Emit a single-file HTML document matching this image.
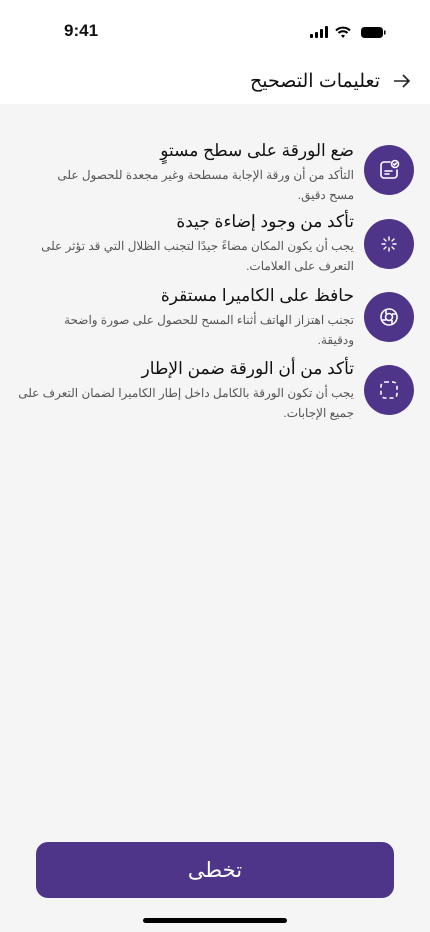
<!DOCTYPE html>
<html><head><meta charset="utf-8"><style>
*{margin:0;padding:0;box-sizing:border-box}
body{width:430px;height:932px;background:#f5f5f5;font-family:"Liberation Sans","Noto Sans CJK SC",sans-serif;position:relative;overflow:hidden;color:#111}
.top{position:absolute;left:0;top:0;width:430px;height:104px;background:#fff}
.time{position:absolute;left:64px;top:21px;font-size:17px;font-weight:bold}
.ht{position:absolute;right:50px;top:70px;font-size:19px;direction:rtl}
.circ{position:absolute;left:364px;width:50px;height:50px;border-radius:50%;background:#4e3589;display:flex;align-items:center;justify-content:center}
.item{position:absolute;right:76px;width:340px;direction:rtl;text-align:right}
.item h3{font-size:17px;font-weight:normal;line-height:22px;color:#111}
.item p{font-size:12px;line-height:20px;color:#555;margin-top:3px;white-space:nowrap}
.btn{position:absolute;left:36px;top:842px;width:358px;height:56px;border-radius:12px;background:#4e3589;color:#fff;font-size:21px;display:flex;align-items:center;justify-content:center}
.home{position:absolute;left:143px;top:918px;width:144px;height:5px;border-radius:3px;background:#000}
</style></head><body>
<div class="top">
<div class="time">9:41</div>
<svg style="position:absolute;left:310px;top:26px" width="76" height="14" viewBox="0 0 76 14">
<rect x="0" y="8" width="3" height="4" rx="1" fill="#000"/><rect x="5" y="6" width="3" height="6" rx="1" fill="#000"/><rect x="10" y="3" width="3" height="9" rx="1" fill="#000"/><rect x="15" y="0" width="3" height="12" rx="1" fill="#000"/>
<path d="M26 4.5a10 10 0 0 1 14 0M28.5 7a6.5 6.5 0 0 1 9 0" stroke="#000" stroke-width="2" fill="none"/><path d="M31 9.5l2 2.5 2-2.5a3 3 0 0 0-4 0z" fill="#000"/>
<rect x="51" y="1" width="22" height="11" rx="3.5" fill="#000"/><rect x="74" y="4.5" width="1.5" height="4" fill="#000"/>
</svg>
<div class="ht">تعليمات التصحيح</div>
<svg style="position:absolute;left:392px;top:73px" width="20" height="16" viewBox="0 0 20 16"><path d="M2 8h15M11 2l6 6-6 6" stroke="#222" stroke-width="1.6" fill="none"/></svg>
</div>

<div class="circ" style="top:145px"><svg width="24" height="24" viewBox="0 0 24 24" fill="none" stroke="#fff" stroke-width="1.6" stroke-linecap="round"><path d="M13 4H7a3 3 0 0 0-3 3v10a3 3 0 0 0 3 3h10a3 3 0 0 0 3-3v-5"/><circle cx="18" cy="6" r="3.5"/><path d="M16.5 6l1 1 2-2M8 13h7M8 16h4"/></svg></div>
<div class="item" style="top:140px"><h3>ضع الورقة على سطح مستوٍ</h3><p>التأكد من أن ورقة الإجابة مسطحة وغير مجعدة للحصول على<br>مسح دقيق.</p></div>

<div class="circ" style="top:219px"><svg width="24" height="24" viewBox="0 0 24 24" stroke="#fff" stroke-width="1.4" stroke-linecap="round"><path d="M12 5v3M12 16v3M5 12h3M16 12h3M7 7l2 2M15 15l2 2M17 7l-2 2M9 15l-2 2"/></svg></div>
<div class="item" style="top:211px"><h3>تأكد من وجود إضاءة جيدة</h3><p>يجب أن يكون المكان مضاءً جيدًا لتجنب الظلال التي قد تؤثر على<br>التعرف على العلامات.</p></div>

<div class="circ" style="top:292px"><svg width="24" height="24" viewBox="0 0 24 24" fill="none" stroke="#fff" stroke-width="1.6"><circle cx="12" cy="12" r="8"/><circle cx="12" cy="12" r="3.5"/><path d="M9 9V4.5M15 15v4.5M9 15H4.5M15 9h4.5"/></svg></div>
<div class="item" style="top:285px"><h3>حافظ على الكاميرا مستقرة</h3><p>تجنب اهتزاز الهاتف أثناء المسح للحصول على صورة واضحة<br>ودقيقة.</p></div>

<div class="circ" style="top:365px"><svg width="24" height="24" viewBox="0 0 24 24" fill="none" stroke="#fff" stroke-width="1.6" stroke-dasharray="4 3"><rect x="4" y="4" width="16" height="16" rx="4"/></svg></div>
<div class="item" style="top:358px"><h3>تأكد من أن الورقة ضمن الإطار</h3><p>يجب أن تكون الورقة بالكامل داخل إطار الكاميرا لضمان التعرف على<br>جميع الإجابات.</p></div>

<div class="btn">تخطى</div>
<div class="home"></div>
</body></html>
